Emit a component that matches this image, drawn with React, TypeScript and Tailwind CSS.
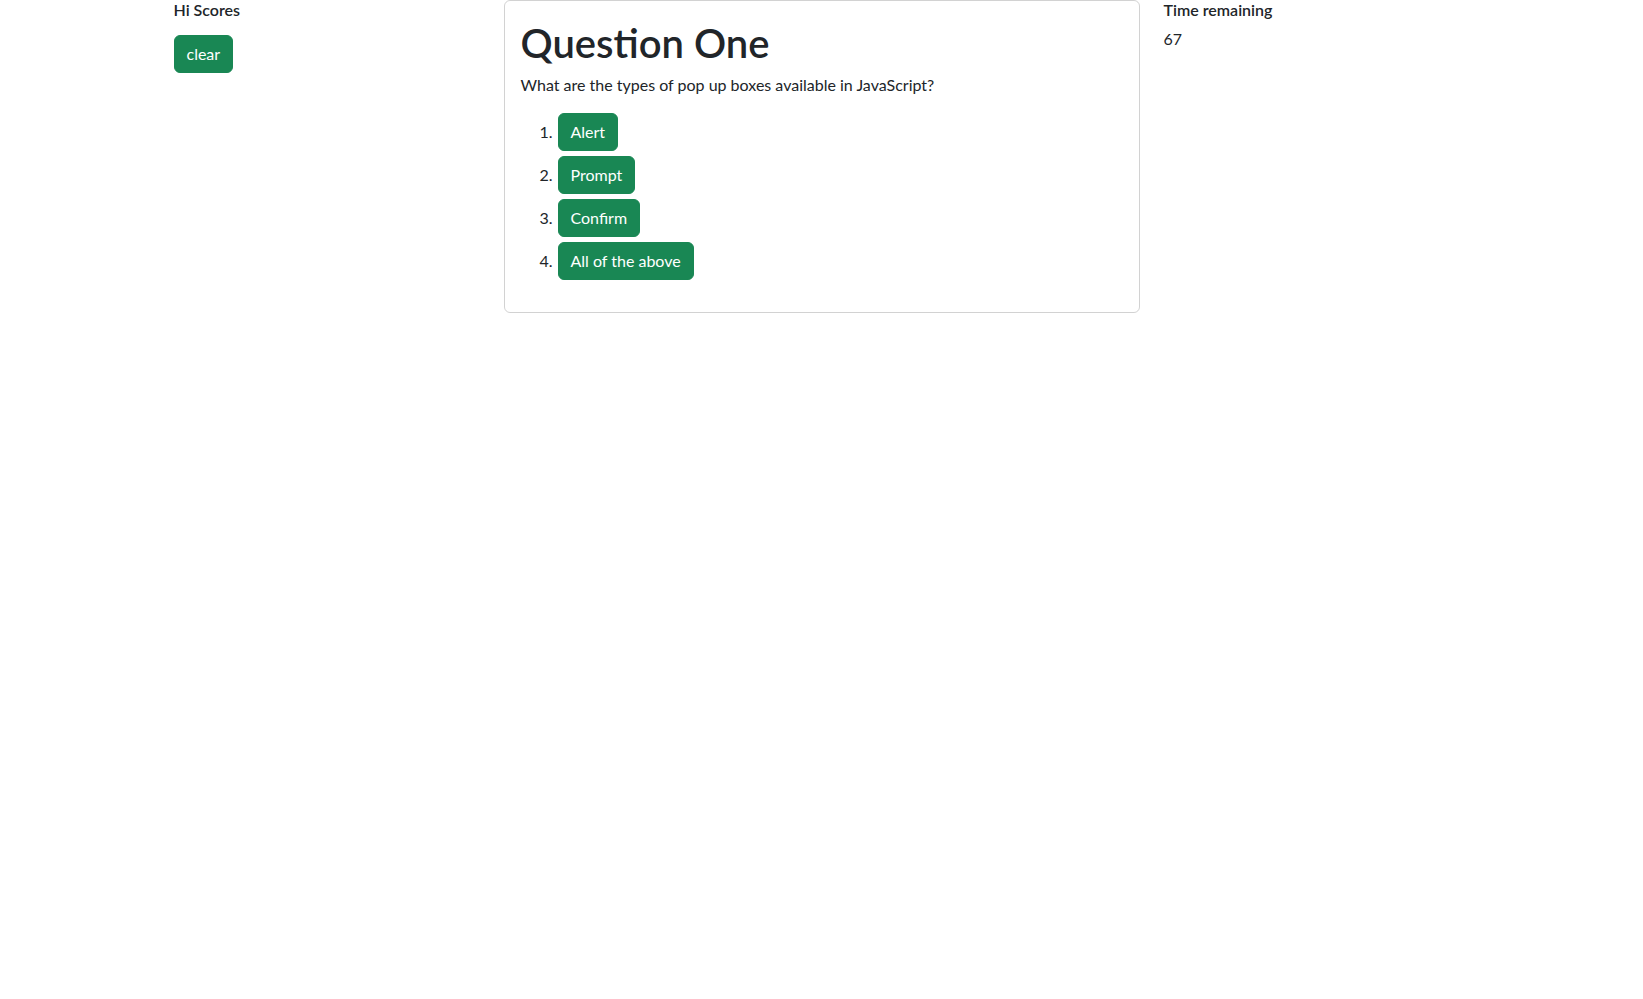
import React, { useState } from 'react';

const answers = ['Alert', 'Prompt', 'Confirm', 'All of the above'];

export default function App() {
  const [time] = useState(67);

  return (
    <div className="min-h-screen bg-white text-[#212529] font-['Lato','Noto_Sans',sans-serif] text-base leading-6">
      <div className="w-[1320px] mx-auto px-3 grid grid-cols-12 gap-x-6">
        {/* hi scores */}
        <div className="col-span-3">
          <h6 className="text-base font-semibold leading-[1.2] mb-2">Hi Scores</h6>
          <button className="mt-2 px-3 py-1.5 rounded-md bg-[#198754] border border-[#198754] text-white leading-6 hover:bg-[#157347]">
            clear
          </button>
        </div>

        {/* question card */}
        <div className="col-span-6">
          <div className="border border-[rgba(0,0,0,0.175)] rounded-md p-4">
            <h1 className="text-[40px] font-semibold leading-[52px] mb-1">Question One</h1>
            <p className="mb-4">What are the types of pop up boxes available in JavaScript?</p>
            <ol className="mb-4">
              {answers.map((a, i) => (
                <li key={a} className="flex items-baseline mb-[5px] last:mb-0">
                  <span className="w-8 text-right">{i + 1}.</span>
                  <button className="ml-[5px] px-3 py-1.5 rounded-md bg-[#198754] border border-[#198754] text-white leading-6 hover:bg-[#157347]">
                    {a}
                  </button>
                </li>
              ))}
            </ol>
          </div>
        </div>

        {/* timer */}
        <div className="col-span-3">
          <h6 className="text-base font-semibold leading-[1.2] mb-2">Time remaining</h6>
          <p>{time}</p>
        </div>
      </div>
    </div>
  );
}
